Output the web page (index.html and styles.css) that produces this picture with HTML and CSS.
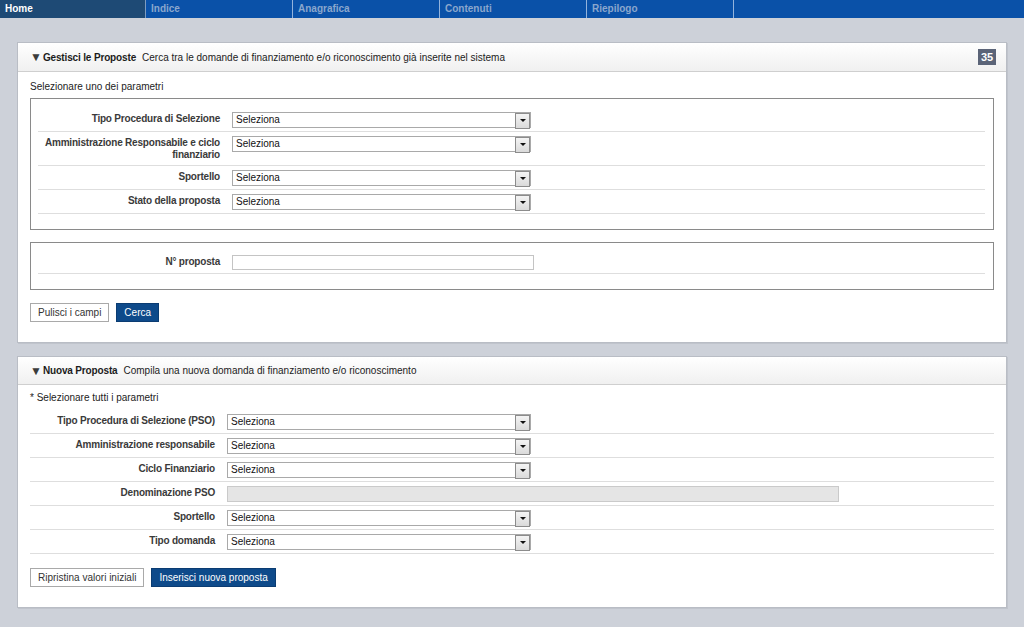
FILE: index.html
```html
<!DOCTYPE html>
<html lang="it">
<head>
<meta charset="utf-8">
<title>Proposte</title>
<link rel="stylesheet" href="styles.css">
</head>
<body>
<nav class="topnav">
  <a class="tab active">Home</a>
  <a class="tab">Indice</a>
  <a class="tab">Anagrafica</a>
  <a class="tab">Contenuti</a>
  <a class="tab">Riepilogo</a>
  <span class="tab-rest"></span>
</nav>

<main class="page">
  <section class="panel panel-search">
    <header class="panel-head">
      <span class="tri">&#9660;</span>
      <strong class="panel-title">Gestisci le Proposte</strong>
      <span class="panel-desc">Cerca tra le domande di finanziamento e/o riconoscimento già inserite nel sistema</span>
      <span class="badge">35</span>
    </header>
    <div class="panel-body">
      <p class="hint">Selezionare uno dei parametri</p>
      <div class="box">
        <div class="row">
          <label class="lbl">Tipo Procedura di Selezione</label>
          <span class="sel w1"><span class="sel-val">Seleziona</span></span>
        </div>
        <div class="row">
          <label class="lbl">Amministrazione Responsabile e ciclo finanziario</label>
          <span class="sel w1"><span class="sel-val">Seleziona</span></span>
        </div>
        <div class="row">
          <label class="lbl">Sportello</label>
          <span class="sel w1"><span class="sel-val">Seleziona</span></span>
        </div>
        <div class="row">
          <label class="lbl">Stato della proposta</label>
          <span class="sel w1"><span class="sel-val">Seleziona</span></span>
        </div>
      </div>
      <div class="box box-2">
        <div class="row">
          <label class="lbl">N° proposta</label>
          <span class="txt w1b"></span>
        </div>
      </div>
      <div class="actions">
        <button class="btn">Pulisci i campi</button>
        <button class="btn btn-primary">Cerca</button>
      </div>
    </div>
  </section>

  <section class="panel panel-new">
    <header class="panel-head">
      <span class="tri">&#9660;</span>
      <strong class="panel-title">Nuova Proposta</strong>
      <span class="panel-desc">Compila una nuova domanda di finanziamento e/o riconoscimento</span>
    </header>
    <div class="panel-body">
      <p class="hint">* Selezionare tutti i parametri</p>
      <div class="rows-2">
        <div class="row r2">
          <label class="lbl">Tipo Procedura di Selezione (PSO)</label>
          <span class="sel w2"><span class="sel-val">Seleziona</span></span>
        </div>
        <div class="row r2">
          <label class="lbl">Amministrazione responsabile</label>
          <span class="sel w2"><span class="sel-val">Seleziona</span></span>
        </div>
        <div class="row r2">
          <label class="lbl">Ciclo Finanziario</label>
          <span class="sel w2"><span class="sel-val">Seleziona</span></span>
        </div>
        <div class="row r2">
          <label class="lbl">Denominazione PSO</label>
          <span class="txt disabled w3"></span>
        </div>
        <div class="row r2">
          <label class="lbl">Sportello</label>
          <span class="sel w2"><span class="sel-val">Seleziona</span></span>
        </div>
        <div class="row r2">
          <label class="lbl">Tipo domanda</label>
          <span class="sel w2"><span class="sel-val">Seleziona</span></span>
        </div>
      </div>
      <div class="actions actions-2">
        <button class="btn">Ripristina valori iniziali</button>
        <button class="btn btn-primary">Inserisci nuova proposta</button>
      </div>
    </div>
  </section>
</main>
</body>
</html>
```

FILE: styles.css
```css
* { box-sizing: border-box; }
html, body { margin: 0; padding: 0; }
body {
  background: #cdd1d9;
  font-family: "Liberation Sans", Arial, sans-serif;
  font-size: 10px;
  color: #222;
  width: 1024px;
  height: 627px;
  overflow: hidden;
}

/* top navigation */
.topnav {
  display: flex;
  height: 18px;
  background: #0a51a8;
}
.tab {
  display: block;
  width: 147px;
  height: 18px;
  line-height: 18px;
  padding-left: 5px;
  font-weight: bold;
  font-size: 10px;
  color: #8ba7cd;
  border-right: 1px solid #93b3dc;
}
.tab.active {
  width: 146px;
  background: #1e4a75;
  color: #fff;
  border-right: 1px solid #7e9cc0;
}
.tab-rest { flex: 1; }

/* page and panels */
.page {
  padding: 24px 17px 0 17px;
  display: flex;
  flex-direction: column;
  gap: 13px;
}
.panel {
  background: #fff;
  border: 1px solid #b9bdc5;
  box-shadow: 1px 1px 0 #c0c4cc;
}
.panel-head {
  display: flex;
  align-items: center;
  height: 29px;
  padding: 0 10px 0 12px;
  background: linear-gradient(#ffffff, #f0f0f0);
  border-bottom: 1px solid #cfcfcf;
}
.panel-new .panel-head { height: 28px; }
.tri {
  font-size: 12px;
  line-height: 12px;
  color: #3c3c3c;
  margin-right: 1px;
}
.panel-title {
  font-weight: bold;
  color: #1c1c1c;
  margin-right: 6px;
  letter-spacing: -0.15px;
}
.panel-desc { color: #222; flex: 1; }
.badge {
  background: #5b6478;
  color: #fff;
  font-weight: bold;
  font-size: 11px;
  width: 18px;
  height: 16px;
  line-height: 16px;
  text-align: center;
}

.panel-body {
  padding: 8px 12px 20px 12px;
}
.panel-new .panel-body { padding-top: 6px; padding-bottom: 20px; }
.hint {
  margin: 0;
  line-height: 14px;
  height: 14px;
  color: #222;
}

.box {
  margin-top: 4px;
  border: 1px solid #8a8a8a;
  padding: 9px 8px 15px 7px;
}
.box-2 {
  margin-top: 12px;
  padding-top: 8px;
}

.row {
  display: grid;
  grid-template-columns: 182px auto;
  column-gap: 12px;
  align-items: start;
  padding: 4px 0 3px 0;
  border-bottom: 1px solid #dedede;
}
.lbl {
  text-align: right;
  font-weight: bold;
  color: #3a3a3a;
  line-height: 12px;
  padding: 1px 0;
  letter-spacing: -0.2px;
}
.rows-2 { margin-top: 5px; }
.row.r2 { grid-template-columns: 185px auto; }

/* selects */
.sel {
  position: relative;
  display: block;
  height: 16px;
  border: 1px solid #a9a9a9;
  background: #fff;
}
.sel-val {
  display: block;
  line-height: 14px;
  padding-left: 3px;
  color: #111;
}
.sel::after {
  content: "";
  position: absolute;
  right: 0;
  top: 0;
  width: 13px;
  height: 14px;
  border: 1px solid #8c8c8c;
  background: linear-gradient(#f4f4f4, #dadada);
}
.sel::before {
  content: "";
  position: absolute;
  right: 4px;
  top: 6px;
  width: 0;
  height: 0;
  border-left: 3px solid transparent;
  border-right: 3px solid transparent;
  border-top: 3px solid #111;
  z-index: 1;
}
.w1 { width: 299px; }
.w2 { width: 304px; }

.txt {
  display: block;
  height: 15px;
  border: 1px solid #c4c4c4;
  background: #fff;
}
.w1b { width: 302px; }
.txt.disabled {
  background: #e5e5e5;
  border-color: #cacaca;
  height: 16px;
}
.w3 { width: 612px; }

/* buttons */
.actions {
  display: flex;
  gap: 7px;
  margin-top: 13px;
}
.actions-2 { margin-top: 14px; }
.btn {
  font-family: "Liberation Sans", Arial, sans-serif;
  font-size: 10px;
  height: 19px;
  padding: 0 7px;
  background: #fff;
  border: 1px solid #a9a9a9;
  color: #333;
  line-height: 17px;
}
.btn-primary {
  background: #0e4a8a;
  border-color: #0b3c72;
  color: #fff;
}
```
